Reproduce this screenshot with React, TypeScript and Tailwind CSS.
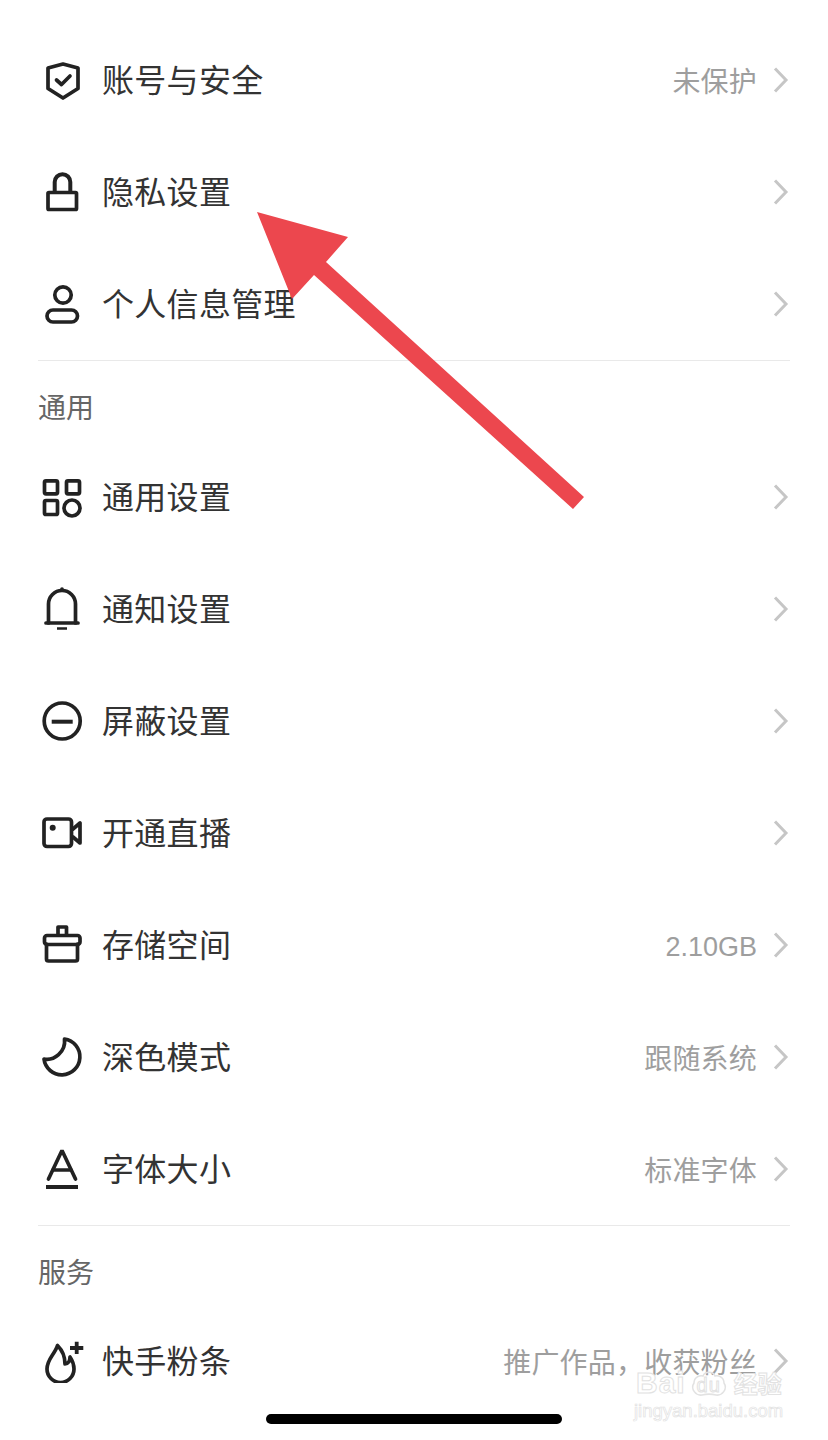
import type { ReactNode } from 'react';

const ink = { fill: 'none', stroke: '#222', strokeWidth: 3.7, strokeLinecap: 'round', strokeLinejoin: 'round' } as const;

function Icon({ children }: { children: ReactNode }) {
  return (
    <svg width="44" height="44" viewBox="0 0 44 44" className="shrink-0" {...ink}>
      {children}
    </svg>
  );
}

function Chevron() {
  return (
    <svg width="18" height="28" viewBox="0 0 18 28" className="shrink-0" fill="none" stroke="#c6c6c6" strokeWidth="3">
      <path d="M3 2.500L14 14 3 25.500" />
    </svg>
  );
}

const icons = {
  shield: (
    <Icon>
      <path d="M23 6l15 4v20.500L23 40 8 30.500V10z" />
      <path d="M16.500 22l5 4.500 8.500-8.500" />
    </Icon>
  ),
  lock: (
    <Icon>
      <rect x="8" y="22.500" width="28.500" height="17" rx="1" />
      <path d="M14.700 21V12a7.800 7.800 0 0 1 15.600 0v9" strokeLinecap="butt" strokeWidth="4" />
    </Icon>
  ),
  user: (
    <Icon>
      <circle cx="23" cy="13" r="8.200" />
      <rect x="7" y="28" width="30.500" height="12" rx="6" />
    </Icon>
  ),
  grid: (
    <Icon>
      <rect x="4.500" y="5.800" width="13" height="13" rx="1.500" />
      <rect x="26.500" y="5.800" width="13" height="13" rx="1.500" />
      <rect x="4.500" y="25.500" width="13" height="14" rx="1.500" />
      <circle cx="32" cy="33" r="8" />
    </Icon>
  ),
  bell: (
    <Icon>
      <path d="M8.500 36V17a13.500 13.500 0 0 1 27 0v19" />
      <path d="M6 36h32" />
      <path d="M22 2v1" />
      <path d="M17 41.500h10" strokeWidth="2.500" strokeLinecap="butt" />
    </Icon>
  ),
  block: (
    <Icon>
      <circle cx="22.200" cy="22" r="18" />
      <path d="M11.700 22.700h21" strokeWidth="4" strokeLinecap="butt" />
    </Icon>
  ),
  video: (
    <Icon>
      <rect x="4" y="8" width="27.500" height="27.500" rx="3" />
      <path d="M33 18l7-6v20l-7-6" />
      <circle cx="12.700" cy="16.700" r="3" fill="#222" stroke="none" />
    </Icon>
  ),
  box: (
    <Icon>
      <rect x="4.500" y="12.500" width="35.500" height="9" rx="2.500" />
      <path d="M6.500 21v15a2 2 0 0 0 2 2h27a2 2 0 0 0 2-2V21" />
      <path d="M18 12V4h8.500v8" />
    </Icon>
  ),
  moon: (
    <Icon>
      <path d="M24.500 4A18 18 0 1 1 4 24c10 2 22-7 20.500-20z" />
    </Icon>
  ),
  font: (
    <Icon>
      <path d="M8.500 32L21.500 4.500h1L35.500 32" strokeLinejoin="miter" />
      <path d="M13 23h18" />
      <path d="M6 40h32" strokeLinecap="butt" strokeWidth="4" />
    </Icon>
  ),
  flame: (
    <Icon>
      <path d="M17.500 6.500C15 15 7 20 7 30a13.500 13.500 0 0 0 27 0c0-5-2-9-4-12 0 4-2 7-5 7 0-7-3-14-7.500-18.500z" />
      <path d="M36.700 2.700V15M30 9h13.300" strokeWidth="3.800" strokeLinecap="butt" />
    </Icon>
  ),
};

type RowProps = { icon: ReactNode; label: string; value?: ReactNode };

function Row({ icon, label, value }: RowProps) {
  return (
    <div className="flex h-[112px] items-center">
      <div className="ml-[2px] w-[62px]">{icon}</div>
      <span className="flex-1 pb-[4px] text-[32px] leading-none tracking-[0.3px] text-[#333]">{label}</span>
      {value && <span className="mr-[15px] text-[28px] leading-none tracking-[0.2px] text-[#9e9e9e]">{value}</span>}
      <Chevron />
    </div>
  );
}

function Section({ title, last }: { title: string; last?: boolean }) {
  return (
    <div className={`flex items-start border-t border-[#e9e9e9] pt-[31px] text-[28px] leading-none text-[#666] ${last ? 'h-[80px]' : 'h-[81px]'}`}>
      {title}
    </div>
  );
}

const latin = { fontFamily: '"Liberation Sans", sans-serif' };

export default function App() {
  return (
    <div
      className="relative h-[1440px] w-[828px] overflow-hidden bg-white px-[38px] pt-[24px]"
      style={{ fontFamily: '"Noto Sans CJK SC", "Liberation Sans", sans-serif' }}
    >
      <Row icon={icons.shield} label="账号与安全" value="未保护" />
      <Row icon={icons.lock} label="隐私设置" />
      <Row icon={icons.user} label="个人信息管理" />
      <Section title="通用" />
      <Row icon={icons.grid} label="通用设置" />
      <Row icon={icons.bell} label="通知设置" />
      <Row icon={icons.block} label="屏蔽设置" />
      <Row icon={icons.video} label="开通直播" />
      <Row
        icon={icons.box}
        label="存储空间"
        value={<span className="text-[27px] tracking-normal" style={latin}>2.10GB</span>}
      />
      <Row icon={icons.moon} label="深色模式" value="跟随系统" />
      <Row icon={icons.font} label="字体大小" value="标准字体" />
      <Section title="服务" last />
      <Row icon={icons.flame} label="快手粉条" value="推广作品，收获粉丝" />

      {/* red annotation arrow */}
      <svg className="absolute left-0 top-0" width="828" height="1440" viewBox="0 0 828 1440">
        <polygon points="257,212 348,237 326,262 584,497 573,509 314,275 292,299" fill="#ec474e" />
      </svg>

      {/* watermark */}
      <div className="absolute left-[636px] top-[1369px] flex h-[28px] items-center font-bold leading-none tracking-[1px] text-white [-webkit-text-stroke:1px_#e2e2e2]">
        <span className="text-[30px]" style={latin}>Bai</span>
        <span className="relative ml-[3px] flex h-[28px] w-[40px] items-center justify-center pt-[4px] text-[20px] font-normal" style={latin}>
          <svg className="absolute inset-0" width="40" height="28" viewBox="0 0 40 28" fill="none" stroke="#e2e2e2" strokeWidth="1.500">
            <path d="M5 14C5 8 11 6 14 7 16 2 24 2 26 7 29 6 35 8 35 14 39 20 33 27 27 26 23 25 17 25 13 26 7 27 1 20 5 14z" />
          </svg>
          <span className="relative">du</span>
        </span>
        <span className="ml-[5px] text-[24px] tracking-normal">经验</span>
      </div>
      <div className="absolute left-[634px] top-[1402px] text-[18.500px] leading-none text-white [-webkit-text-stroke:0.7px_#e2e2e2]" style={latin}>
        jingyan.baidu.com
      </div>

      {/* home indicator */}
      <div className="absolute bottom-[16px] left-[266px] h-[10px] w-[296px] rounded-full bg-black" />
    </div>
  );
}
